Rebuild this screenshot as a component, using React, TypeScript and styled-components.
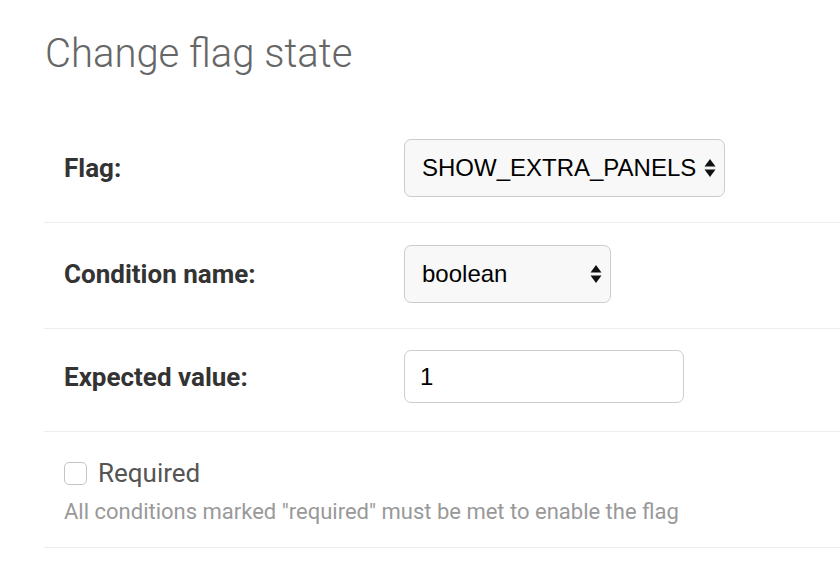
import React from "react";
import styled, { createGlobalStyle } from "styled-components";

const Global = createGlobalStyle`
  html, body { margin: 0; padding: 0; background: #fff; }
  body { font-family: Roboto, "Noto Sans", sans-serif; }
`;

const Page = styled.div`
  padding: 28px 0 0 44px;
  width: 796px;
`;

const Title = styled.h1`
  margin: 0 0 0 1px;
  font-family: Roboto, sans-serif;
  font-weight: 300;
  font-size: 40px;
  line-height: 52px;
  color: #666;
  height: 89px;
`;

const Row = styled.div<{ $pt: number; $pb: number }>`
  display: flex;
  align-items: center;
  padding: ${(p) => p.$pt}px 0 ${(p) => p.$pb}px 20px;
  border-bottom: 1px solid #eee;
`;

const Label = styled.label`
  width: 340px;
  flex: none;
  font-family: Roboto, sans-serif;
  font-weight: 700;
  font-size: 26px;
  color: #333;
`;

const SelectBox = styled.div<{ $w: number }>`
  box-sizing: border-box;
  width: ${(p) => p.$w}px;
  height: 58px;
  display: flex;
  align-items: center;
  justify-content: space-between;
  padding: 0 8px 0 17px;
  background: #f8f8f8;
  border: 1.5px solid #ccc;
  border-radius: 7px;
  font-family: "Liberation Sans", Arial, sans-serif;
  font-size: 24px;
  color: #000;
`;

const TextInput = styled.div`
  box-sizing: border-box;
  width: 280px;
  height: 53px;
  display: flex;
  align-items: center;
  padding: 0 15px;
  background: #fff;
  border: 1.5px solid #ccc;
  border-radius: 7px;
  font-family: "Liberation Sans", Arial, sans-serif;
  font-size: 24px;
  color: #000;
`;

const CheckRow = styled.div`
  padding: 26px 0 23px 20px;
  border-bottom: 1px solid #eee;
`;

const CheckLine = styled.div`
  display: flex;
  align-items: center;
  gap: 11px;
`;

const CheckBox = styled.span`
  box-sizing: border-box;
  width: 23px;
  height: 23px;
  border: 1.5px solid #c4c4c4;
  border-radius: 5px;
  background: #fff;
`;

const CheckLabel = styled.span`
  font-family: Roboto, sans-serif;
  font-size: 26px;
  color: #555;
  line-height: 30px;
`;

const Help = styled.div`
  margin-top: 11px;
  font-family: Roboto, sans-serif;
  font-size: 22px;
  color: #999;
`;

const Arrows = () => (
  <svg width="12" height="20" viewBox="0 0 12 20">
    <path d="M6 1 L11.5 8.5 H0.5 Z" fill="#111" />
    <path d="M6 19 L11.5 11.5 H0.5 Z" fill="#111" />
  </svg>
);

export default function App() {
  return (
    <Page>
      <Global />
      <Title>Change flag state</Title>
      <Row $pt={22} $pb={25}>
        <Label>Flag:</Label>
        <SelectBox $w={321}>
          <span>SHOW_EXTRA_PANELS</span>
          <Arrows />
        </SelectBox>
      </Row>
      <Row $pt={22} $pb={25}>
        <Label>Condition name:</Label>
        <SelectBox $w={207}>
          <span>boolean</span>
          <Arrows />
        </SelectBox>
      </Row>
      <Row $pt={21} $pb={28}>
        <Label>Expected value:</Label>
        <TextInput>1</TextInput>
      </Row>
      <CheckRow>
        <CheckLine>
          <CheckBox />
          <CheckLabel>Required</CheckLabel>
        </CheckLine>
        <Help>All conditions marked "required" must be met to enable the flag</Help>
      </CheckRow>
    </Page>
  );
}
